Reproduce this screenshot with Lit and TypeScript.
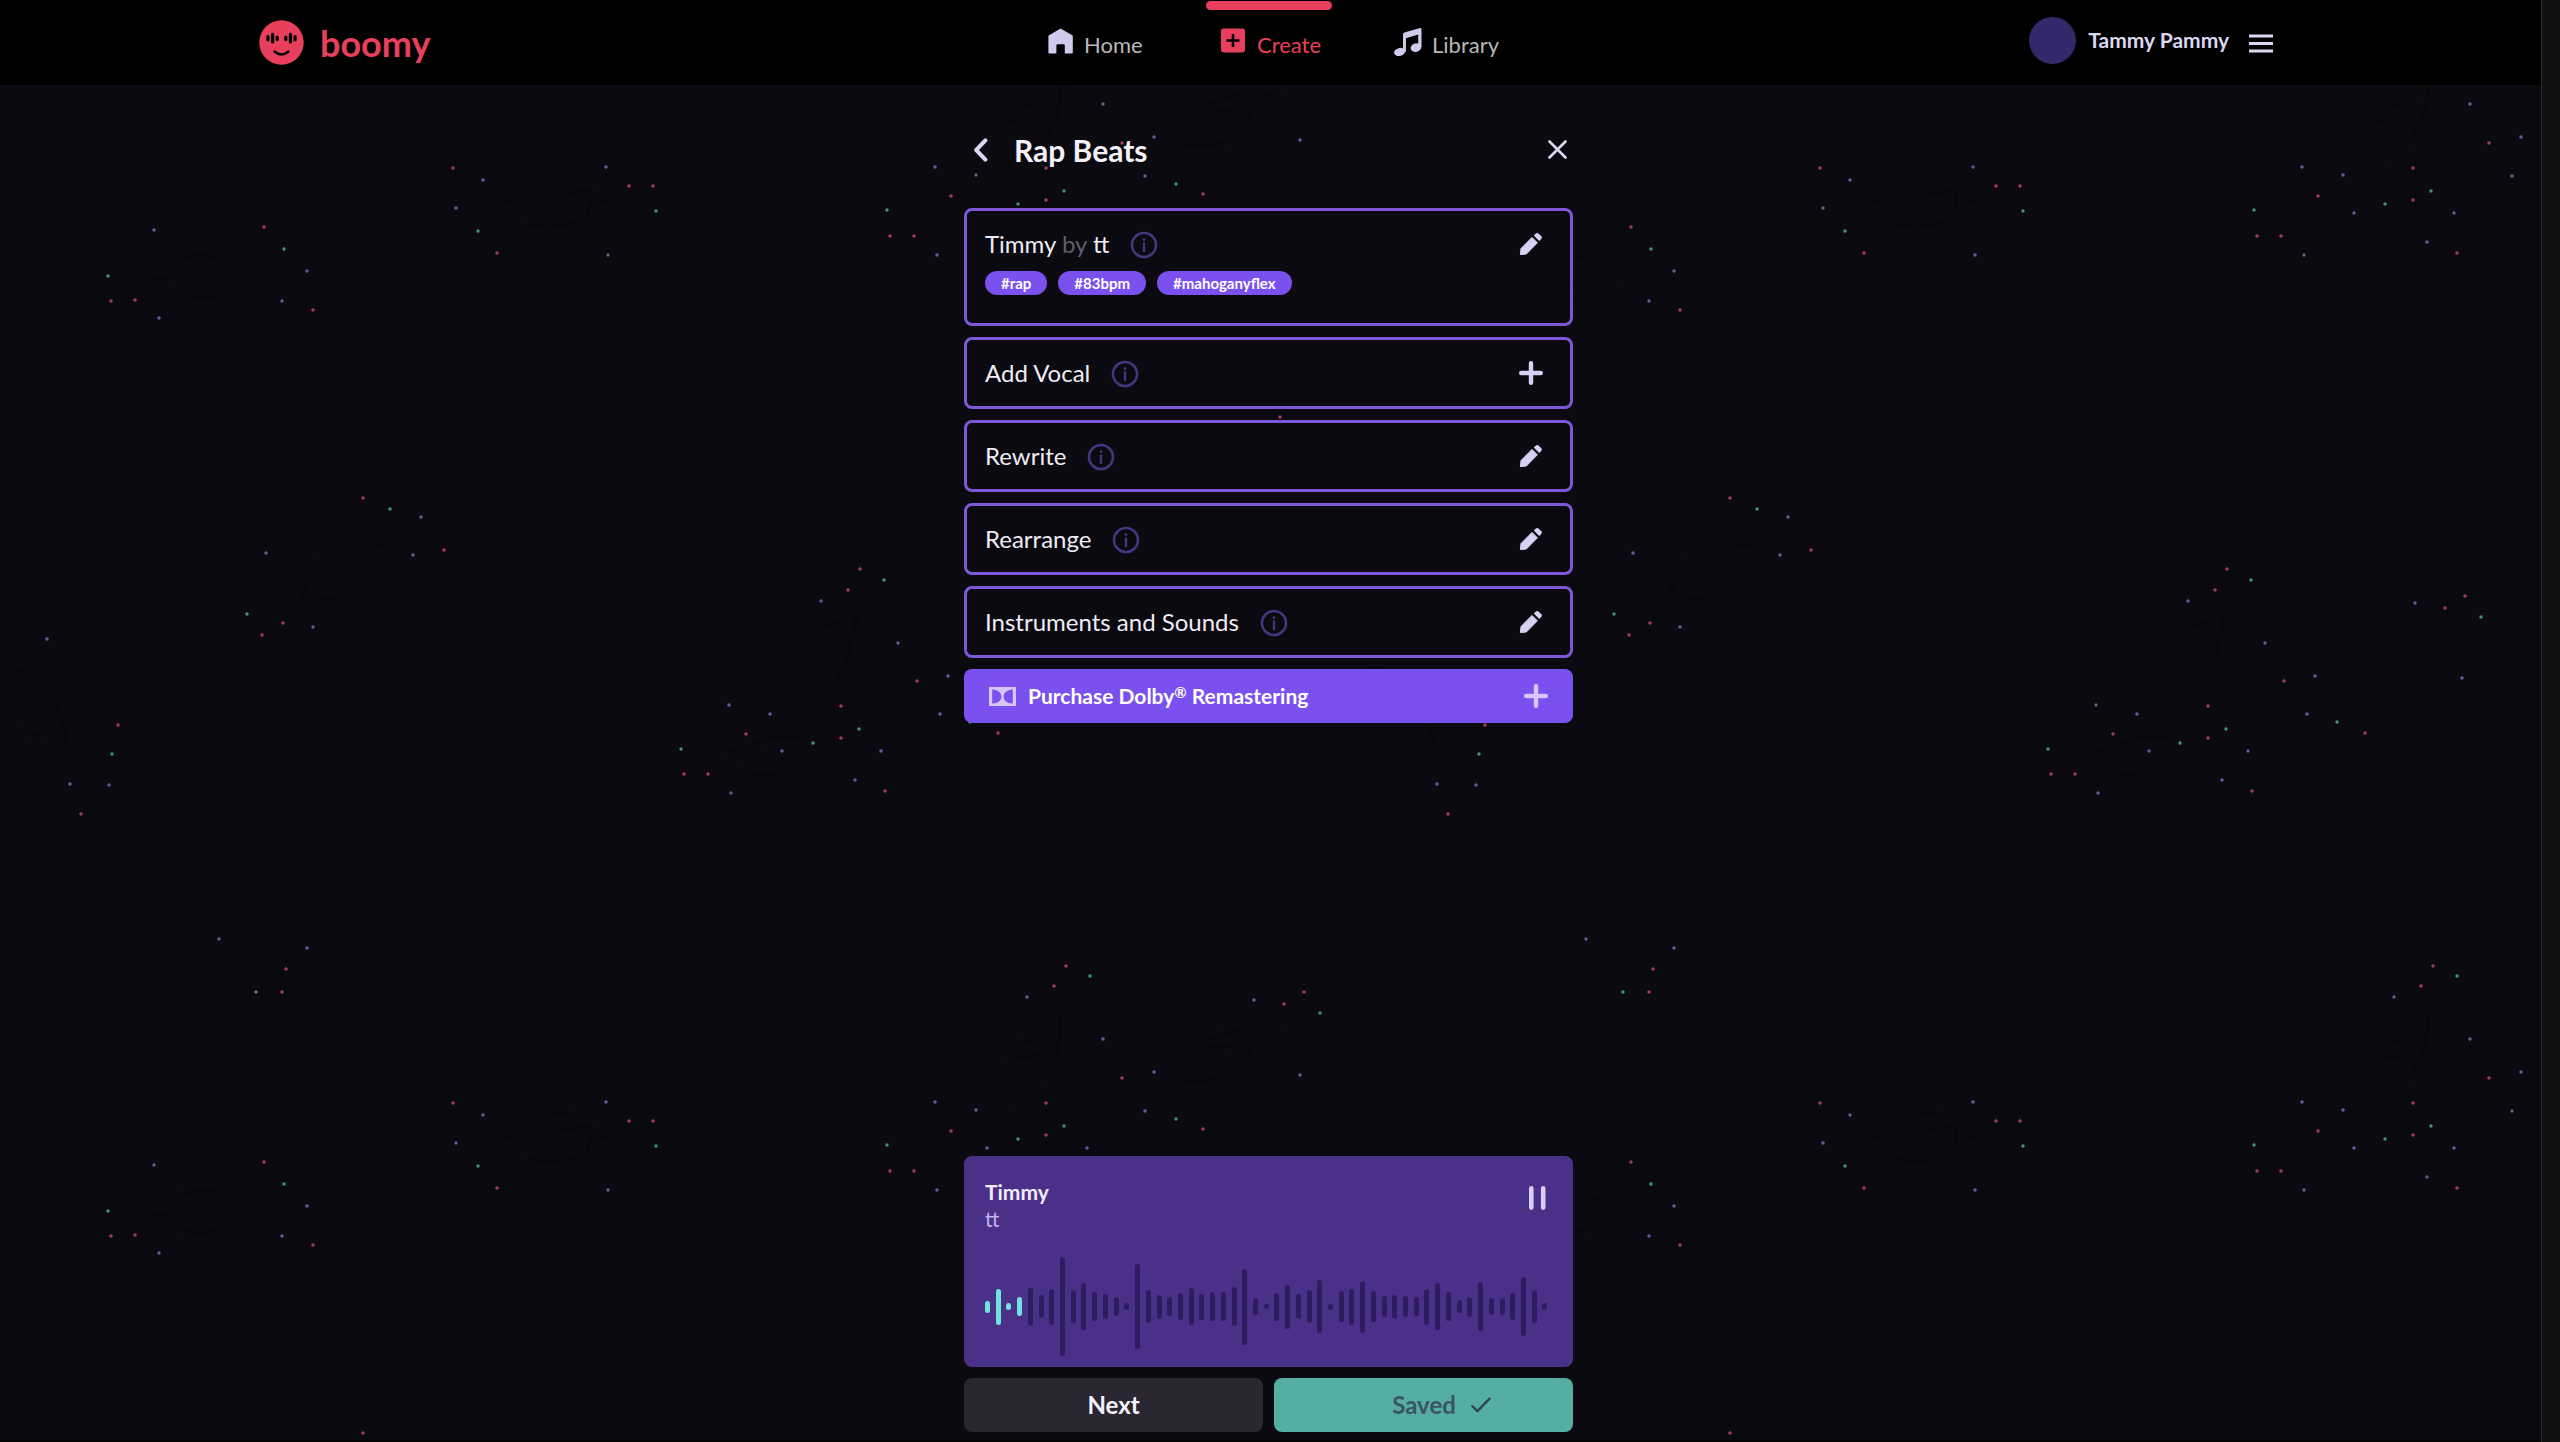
import { LitElement, html, svg, css } from "lit";
import { customElement, property } from "lit/decorators.js";
import { classMap } from "lit/directives/class-map.js";
import { styleMap } from "lit/directives/style-map.js";

const pencil = html`<svg width="24" height="24" viewBox="0 0 24 24" aria-hidden="true">
  <path fill="currentColor" d="M1.4 22.6 L2 16.6 L13 5.4 L18.4 10.8 L7.4 22 Z" stroke="currentColor" stroke-width="1" stroke-linejoin="round"/>
  <path fill="currentColor" d="M14.8 3.6 L16.9 1.5 Q18.2 0.4 19.5 1.5 L22.3 4.3 Q23.4 5.6 22.3 6.9 L20.2 9 Z"/>
</svg>`;

const plus = html`<svg width="24" height="24" viewBox="0 0 24 24" aria-hidden="true">
  <path d="M12 2.2V21.8M2.2 12H21.8" stroke="currentColor" stroke-width="4.4" stroke-linecap="round"/>
</svg>`;

const infoIcon = html`<svg width="28" height="28" viewBox="0 0 28 28" fill="none" aria-hidden="true">
  <circle cx="14" cy="14" r="12" stroke="currentColor" stroke-width="2.6"/>
  <circle cx="14" cy="8.6" r="1.4" fill="currentColor"/>
  <path d="M14 12.4V20" stroke="currentColor" stroke-width="2.4" stroke-linecap="round"/>
</svg>`;

const homeIcon = html`<svg width="26" height="26" viewBox="0 0 26 26" aria-hidden="true">
  <path fill="#cfcbee" d="M12.6 0.4 L24.2 7.2 Q24.8 7.6 24.8 8.4 V24.4 Q24.8 25.4 23.8 25.4 H16.8 V17.4 Q16.8 16.2 15.6 16.2 H9.6 Q8.4 16.2 8.4 17.4 V25.4 H1.4 Q0.4 25.4 0.4 24.4 V8.4 Q0.4 7.6 1 7.2 Z"/>
</svg>`;

const createIcon = html`<svg width="26" height="26" viewBox="0 0 26 26" aria-hidden="true">
  <rect x="0" y="0.4" width="24" height="24" rx="2.4" fill="#e8405c"/>
  <path d="M12 6V19M5.5 12.5H18.5" stroke="#000" stroke-width="2.6"/>
</svg>`;

const libraryIcon = html`<svg width="28" height="28" viewBox="0 0 28 28" aria-hidden="true">
  <path fill="#cfcbee" d="M9 6.4 Q9 5 10.3 4.5 L26.2 0 Q27.4 -0.2 27.4 1 V19 H24.4 V6.4 L11.8 10.2 V23.6 H9 Z"/>
  <ellipse cx="5.6" cy="24" rx="5.6" ry="4" fill="#cfcbee" transform="rotate(-16 5.6 24)"/>
  <ellipse cx="22" cy="19.6" rx="5.4" ry="4.2" fill="#cfcbee" transform="rotate(-16 22 19.6)"/>
  <path d="M10.4 8V24M25.9 3V19.6" stroke="#cfcbee" stroke-width="2.6"/>
</svg>`;

type Hue = "r" | "p" | "g";

/* One repeat of the confetti pattern, 1367 by 935. */
const CONFETTI: [number, number, Hue][] = [
  [453, 168, "r"], [483, 180, "p"], [456, 208, "p"], [478, 231, "g"], [497, 253, "r"], [606, 167, "p"],
  [629, 186, "r"], [653, 186, "r"], [656, 211, "g"], [608, 255, "p"], [154, 230, "p"], [264, 227, "r"],
  [284, 249, "g"], [307, 271, "p"], [108, 276, "g"], [111, 301, "r"], [135, 300, "r"], [282, 301, "p"],
  [313, 310, "r"], [159, 318, "p"], [935, 167, "p"], [976, 175, "p"], [951, 196, "r"], [887, 210, "g"],
  [890, 236, "r"], [914, 236, "r"], [937, 255, "p"], [363, 498, "r"], [390, 509, "g"], [421, 517, "p"],
  [266, 553, "p"], [413, 555, "p"], [444, 550, "r"], [247, 614, "g"], [283, 623, "r"], [313, 627, "p"],
  [262, 635, "r"], [860, 569, "r"], [884, 580, "g"], [848, 590, "r"], [821, 601, "p"], [47, 639, "p"],
  [118, 725, "r"], [112, 754, "g"], [70, 784, "p"], [109, 785, "p"], [81, 814, "r"], [898, 643, "p"],
  [917, 681, "r"], [948, 676, "p"], [940, 714, "p"], [729, 705, "p"], [770, 714, "p"], [841, 706, "r"],
  [746, 734, "r"], [859, 729, "g"], [813, 743, "g"], [841, 738, "r"], [681, 749, "g"], [782, 751, "p"],
  [881, 751, "p"], [684, 774, "r"], [708, 774, "r"], [855, 780, "p"], [885, 791, "r"], [731, 793, "p"],
  [970, 722, "g"], [998, 733, "r"], [219, 4, "p"], [307, 13, "p"], [286, 34, "r"], [256, 57, "g"],
  [282, 57, "r"], [1066, 31, "r"], [1090, 41, "g"], [1054, 51, "r"], [1027, 62, "p"], [1103, 104, "p"],
  [1254, 65, "p"], [1284, 69, "r"], [1304, 57, "r"], [1320, 78, "g"], [1154, 137, "p"], [1122, 143, "r"],
  [1300, 140, "p"], [1046, 168, "r"], [1145, 176, "p"], [1176, 184, "g"], [1203, 194, "r"], [1064, 191, "g"],
  [1046, 200, "r"], [1018, 204, "g"], [987, 213, "p"], [1087, 213, "p"], [1060, 242, "p"], [1090, 253, "r"],
  [1280, 417, "r"], [1048, 603, "p"], [1078, 608, "r"], [1098, 596, "r"], [1114, 617, "g"], [1095, 678, "p"],
];

const HUES: Record<Hue, string> = { r: "#a93a55", p: "#645a96", g: "#3f937f" };

/* Faint doodles that sit between the confetti. */
const DOODLES = [
  "M530 224 Q555 232 586 218 Q592 205 588 190 M542 184 Q558 176 572 180 M556 196 L590 190 M505 203 L516 199 M598 203 L612 201",
  "M178 262 Q205 246 236 268 M176 292 Q206 304 220 292 M150 280 L168 278 M246 276 L260 278 M198 284 L206 284",
  "M300 604 Q310 560 344 548 M330 586 Q342 572 352 584 M318 598 Q336 602 346 594 M372 546 L384 544",
  "M858 616 Q852 640 842 650 M856 618 Q848 690 806 702 M812 630 L838 622 M810 664 L822 650",
  "M8 668 Q60 680 66 740 M14 704 Q26 720 34 716 M20 730 L38 736 M66 744 L76 750",
  "M744 756 Q760 730 800 738 M744 770 Q770 782 790 764 M730 752 L740 750",
  "M1060 82 Q1064 140 1012 160 M1012 110 L1036 104 M1010 120 Q1024 128 1040 118 M1006 168 L1014 160",
  "M1182 146 Q1240 150 1250 112 Q1252 96 1278 92 M1208 104 L1246 92 M1208 112 L1236 110",
];

@customElement("confetti-field")
export class ConfettiField extends LitElement {
  static styles = css`
    :host { display: block; }
    svg { display: block; width: 100%; height: 100%; }
  `;

  render() {
    return html`<svg aria-hidden="true">
      <defs>
        <pattern id="confetti" width="1367" height="935" patternUnits="userSpaceOnUse">
          ${DOODLES.map((d) => svg`<path d=${d} fill="none" stroke="#08080d" stroke-width="5" stroke-linecap="round"/>`)}
          ${CONFETTI.map(([x, y, hue]) => svg`<circle cx=${x} cy=${y} r="1.7" fill=${HUES[hue]}/>`)}
        </pattern>
      </defs>
      <rect width="100%" height="100%" fill="url(#confetti)"/>
    </svg>`;
  }
}

@customElement("top-bar")
export class TopBar extends LitElement {
  static styles = css`
    :host {
      display: grid;
      grid-template-columns: 1fr auto 1fr;
      height: 85px;
      padding: 0 262px 0 259px;
      background: #000;
    }
    a { color: inherit; text-decoration: none; }
    .brand { display: flex; align-items: center; gap: 16px; color: #e8405c; justify-self: start; }
    .brand svg { display: block; }
    .brand-name { font-size: 36px; line-height: 40px; font-weight: 700; }
    .nav { display: grid; grid-template-columns: repeat(3, 126px); gap: 47px; }
    .item {
      display: flex;
      align-items: flex-start;
      gap: 10px;
      padding: 28px 0 0 15px;
      color: #b9b7b9;
      font-size: 22px;
      line-height: 24px;
      position: relative;
    }
    .item svg { flex: none; }
    .item span { padding-top: 5px; }
    .item.active { color: #e8405c; }
    .item.active::before {
      content: "";
      position: absolute;
      left: 0;
      right: 0;
      top: 1px;
      height: 9px;
      border-radius: 5px;
      background: #e8405c;
    }
    .account { display: flex; align-items: center; justify-self: end; gap: 12px; padding-bottom: 5px; }
    .avatar { width: 47px; height: 47px; border-radius: 50%; background: #34276a; }
    .name { font-size: 21px; line-height: 24px; font-weight: 700; color: #dcd6f0; }
    .menu { border: 0; padding: 6px 6px 0 8px; background: none; color: #dcd6f0; line-height: 0; }
  `;

  render() {
    const items = [
      { label: "Home", icon: homeIcon, active: false },
      { label: "Create", icon: createIcon, active: true },
      { label: "Library", icon: libraryIcon, active: false },
    ];
    return html`
      <a class="brand" href="#">
        <svg width="45" height="45" viewBox="0 0 45 45" aria-hidden="true">
          <circle cx="22.5" cy="22.5" r="22.2" fill="#e8405c"/>
          <path d="M9 16.6V20M13.6 14.4V22M18.2 17V19.6M26.8 17V19.6M31.4 14.4V22M36 16.6V20" stroke="#000" stroke-width="3.2" stroke-linecap="round"/>
          <path d="M15.5 31.5Q22.5 37.4 29.5 31.5" fill="none" stroke="#000" stroke-width="2.4" stroke-linecap="round"/>
        </svg>
        <span class="brand-name">boomy</span>
      </a>
      <nav class="nav">
        ${items.map((i) => html`<a href="#" class=${classMap({ item: true, active: i.active })}>${i.icon}<span>${i.label}</span></a>`)}
      </nav>
      <div class="account">
        <div class="avatar"></div>
        <span class="name">Tammy Pammy</span>
        <button class="menu" aria-label="Menu">
          <svg width="24" height="19" viewBox="0 0 24 19" aria-hidden="true">
            <path d="M0 2H24M0 9.5H24M0 17H24" stroke="currentColor" stroke-width="3"/>
          </svg>
        </button>
      </div>
    `;
  }
}

@customElement("edit-card")
export class EditCard extends LitElement {
  @property() heading = "";
  @property() artist = "";
  @property() action: "edit" | "add" = "edit";
  @property({ attribute: false }) tags: string[] = [];

  static styles = css`
    :host {
      display: flex;
      flex-direction: column;
      gap: 13px;
      padding: 19px 27px 19px 18px;
      border: 3px solid #7e57d8;
      border-radius: 8px;
      background: #0a0a10;
    }
    .row { display: flex; align-items: center; gap: 21px; height: 28px; }
    .heading { margin: 0; font-size: 24px; line-height: 28px; font-weight: 400; color: #efecf5; }
    .by { color: #615d6c; }
    button { display: block; border: 0; padding: 0; background: none; line-height: 0; }
    .info { color: #46347f; margin-top: 2px; }
    .action { margin-left: auto; color: #d9d1f3; }
    .tags { display: flex; gap: 11px; margin: 0; padding: 0 0 9px; list-style: none; }
    .tag {
      padding: 0 16px;
      border-radius: 12px;
      background: #7a50ee;
      color: #fff;
      font-size: 15px;
      line-height: 24px;
      font-weight: 700;
    }
  `;

  render() {
    return html`
      <div class="row">
        <h2 class="heading">${this.heading}${this.artist ? html` <span class="by">by</span> ${this.artist}` : ""}</h2>
        <button class="info" aria-label="About ${this.heading}">${infoIcon}</button>
        <button class="action" aria-label="${this.action} ${this.heading}">${this.action === "add" ? plus : pencil}</button>
      </div>
      ${this.tags.length ? html`<ul class="tags">${this.tags.map((t) => html`<li class="tag">${t}</li>`)}</ul>` : ""}
    `;
  }
}

const WAVE = [
  12, 36, 7, 19, 38, 23, 36, 99, 33, 47, 29, 25, 19, 7, 85, 33, 24, 19, 27, 37, 26, 29, 29, 39, 76, 17, 5,
  28, 44, 25, 33, 53, 6, 31, 36, 52, 31, 21, 24, 21, 19, 36, 47, 29, 13, 20, 49, 17, 17, 27, 59, 33, 7,
];
const PLAYED = 4;

@customElement("track-player")
export class TrackPlayer extends LitElement {
  static styles = css`
    :host {
      display: block;
      padding: 23px 25px 11px 21px;
      border-radius: 8px;
      background: #4a3088;
    }
    .top { display: flex; justify-content: space-between; align-items: flex-start; }
    .title { margin: 0; font-size: 21px; line-height: 26px; font-weight: 700; color: #f1ebff; }
    .artist { margin: 0; font-size: 21px; line-height: 28px; color: #c3b2e6; }
    .pause { border: 0; padding: 7px 2px 0 0; background: none; line-height: 0; }
    .wave { display: flex; justify-content: space-between; align-items: center; height: 99px; margin-top: 24px; }
    .bar { width: 5px; border-radius: 3px; background: #2e1d5e; }
    .bar.played { background: #6fe3dc; }
  `;

  render() {
    return html`
      <div class="top">
        <div>
          <h2 class="title">Timmy</h2>
          <p class="artist">tt</p>
        </div>
        <button class="pause" aria-label="Pause">
          <svg width="18" height="24" viewBox="0 0 18 24" aria-hidden="true">
            <path d="M3.3 2.4V21.6M15.2 2.4V21.6" stroke="#d9ccf6" stroke-width="4.6" stroke-linecap="round"/>
          </svg>
        </button>
      </div>
      <div class="wave">
        ${WAVE.map((h, i) => html`<div class=${classMap({ bar: true, played: i < PLAYED })} style=${styleMap({ height: `${h}px` })}></div>`)}
      </div>
    `;
  }
}

@customElement("app-root")
export class AppRoot extends LitElement {
  static styles = css`
    :host {
      display: grid;
      grid-template-columns: minmax(0, 1fr) 19px;
      min-height: 100vh;
      font-family: Lato, "Open Sans", sans-serif;
      background: #0a0a10;
    }
    .page {
      display: flex;
      flex-direction: column;
      position: relative;
      border-bottom: 2px solid #050508;
      box-sizing: border-box;
    }
    .gutter { background: #111110; border-left: 1px solid #29292b; }
    confetti-field { position: absolute; inset: 0; }
    top-bar { position: relative; }
    .column {
      position: relative;
      flex: 1;
      display: flex;
      flex-direction: column;
      gap: 11px;
      width: 100%;
      max-width: 613px;
      box-sizing: border-box;
      margin: 0 auto;
      padding: 0 4px 8px 0;
    }
    .head { display: flex; align-items: center; height: 112px; padding: 17px 6px 0 9px; box-sizing: border-box; }
    .head h1 { flex: 1; margin: 0 0 0 26px; font-size: 30px; line-height: 34px; font-weight: 700; color: #f4f1fb; }
    button { font-family: inherit; }
    .icon { border: 0; padding: 0; background: none; color: #dcd6f0; line-height: 0; }
    .dolby {
      display: flex;
      align-items: center;
      gap: 12px;
      height: 54px;
      padding: 0 25px;
      border: 0;
      border-radius: 8px;
      background: #7a50ee;
      color: #fff;
      font-size: 21px;
      line-height: 24px;
      font-weight: 700;
    }
    .dolby svg { color: #d6c6fb; }
    .dolby > svg:last-child { margin-left: auto; }
    .dolby sup { font-size: 15px; line-height: 0; vertical-align: 6px; }
    track-player { margin-top: auto; }
    .actions { display: grid; grid-template-columns: 1fr 1fr; gap: 11px; }
    .button {
      display: flex;
      align-items: center;
      justify-content: center;
      gap: 15px;
      height: 54px;
      border: 0;
      border-radius: 8px;
      font-size: 24px;
      line-height: 28px;
      font-weight: 700;
    }
    .next { background: #2a2733; color: #f4f1fb; }
    .saved { padding-left: 42px; background: #54afa2; color: #3b5463; }
  `;

  render() {
    return html`
      <div class="page">
        <confetti-field></confetti-field>
        <top-bar></top-bar>
        <main class="column">
          <div class="head">
            <button class="icon" aria-label="Back">
              <svg width="15" height="28" viewBox="0 0 15 28" fill="none" aria-hidden="true">
                <path d="M12.4 4.4L3.2 14L12.4 23.6" stroke="currentColor" stroke-width="4" stroke-linecap="round" stroke-linejoin="round"/>
              </svg>
            </button>
            <h1>Rap Beats</h1>
            <button class="icon" aria-label="Close">
              <svg width="19" height="19" viewBox="0 0 19 19" aria-hidden="true">
                <path d="M1.5 1.5L17.5 17.5M17.5 1.5L1.5 17.5" stroke="currentColor" stroke-width="2.6" stroke-linecap="round"/>
              </svg>
            </button>
          </div>
          <edit-card heading="Timmy" artist="tt" .tags=${["#rap", "#83bpm", "#mahoganyflex"]}></edit-card>
          <edit-card heading="Add Vocal" action="add"></edit-card>
          <edit-card heading="Rewrite"></edit-card>
          <edit-card heading="Rearrange"></edit-card>
          <edit-card heading="Instruments and Sounds"></edit-card>
          <button class="dolby">
            <svg width="27" height="19" viewBox="0 0 27 19" aria-hidden="true">
              <path fill="currentColor" fill-rule="evenodd" d="M0 0H27V19H0Z M3.2 2.4V16.6H4.4Q12.4 15.4 12.4 9.5T4.4 2.4Z M23.8 2.4H22.6Q14.6 3.6 14.6 9.5T22.6 16.6H23.8Z"/>
            </svg>
            <span>Purchase Dolby<sup>®</sup> Remastering</span>
            ${plus}
          </button>
          <track-player></track-player>
          <div class="actions">
            <button class="button next">Next</button>
            <button class="button saved">Saved
              <svg width="20" height="16" viewBox="0 0 20 16" fill="none" aria-hidden="true">
                <path d="M1.4 9.2L6.4 14.2L18.6 1.6" stroke="#2f4650" stroke-width="2.4" stroke-linecap="round" stroke-linejoin="round"/>
              </svg>
            </button>
          </div>
        </main>
      </div>
      <div class="gutter"></div>
    `;
  }
}
